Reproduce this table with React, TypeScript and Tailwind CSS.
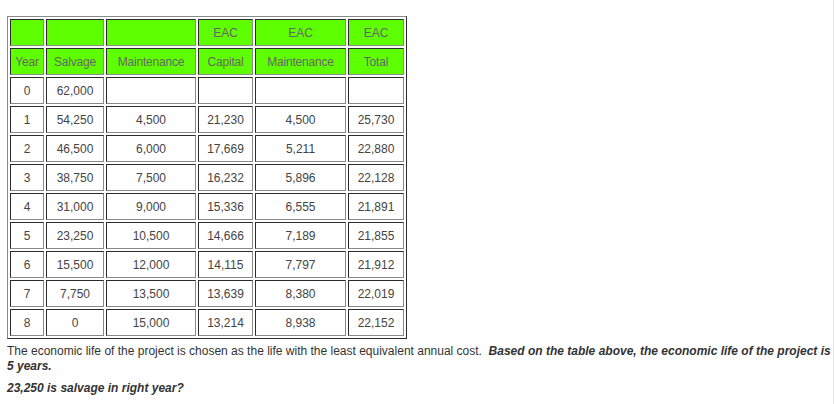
import React from 'react';

const HEAD_TOP = ['', '', '', 'EAC', 'EAC', 'EAC'];
const HEAD = ['Year', 'Salvage', 'Maintenance', 'Capital', 'Maintenance', 'Total'];

const ROWS: string[][] = [
  ['0', '62,000', '', '', '', ''],
  ['1', '54,250', '4,500', '21,230', '4,500', '25,730'],
  ['2', '46,500', '6,000', '17,669', '5,211', '22,880'],
  ['3', '38,750', '7,500', '16,232', '5,896', '22,128'],
  ['4', '31,000', '9,000', '15,336', '6,555', '21,891'],
  ['5', '23,250', '10,500', '14,666', '7,189', '21,855'],
  ['6', '15,500', '12,000', '14,115', '7,797', '21,912'],
  ['7', '7,750', '13,500', '13,639', '8,380', '22,019'],
  ['8', '0', '15,000', '13,214', '8,938', '22,152'],
];

const cellBase =
  'h-[27px] flex items-center justify-center border border-t-[#2b2b2b] border-l-[#2b2b2b] border-r-[#8a8a8a] border-b-[#8a8a8a] text-[12px] leading-none';

export default function App() {
  return (
    <div className="w-[834px] h-[404px] bg-white border-r border-[#e4e4e4] overflow-hidden font-['Liberation_Sans',Arial,sans-serif]">
      <div className="pt-4 pl-[7px]">
        <div className="inline-grid grid-cols-[34px_58px_90px_55px_91px_56px] gap-[2px] p-[2px] border border-t-[#8a8a8a] border-l-[#8a8a8a] border-r-[#2b2b2b] border-b-[#2b2b2b]">
          {HEAD_TOP.map((h, i) => (
            <div key={'t' + i} className={`${cellBase} bg-[#5eff00] text-[#666]`}>
              {h}
            </div>
          ))}
          {HEAD.map((h, i) => (
            <div key={'h' + i} className={`${cellBase} bg-[#5eff00] text-[#666] tracking-[-0.2px]`}>
              {h}
            </div>
          ))}
          {ROWS.map((row, r) =>
            row.map((v, c) => (
              <div key={r + '-' + c} className={`${cellBase} bg-white text-[#444]`}>
                {v}
              </div>
            ))
          )}
        </div>
      </div>

      <div className="pl-[7px] pr-[2px] pt-[5px] text-[12px] leading-[15px] text-[#333]">
        <p>
          The economic life of the project is chosen as the life with the least equivalent annual cost.{'\u00a0 '}
          <b className="italic">Based on the table above, the economic life of the project is 5 years.</b>
        </p>
        <p className="mt-[7px] font-bold italic">23,250 is salvage in right year?</p>
      </div>
    </div>
  );
}
